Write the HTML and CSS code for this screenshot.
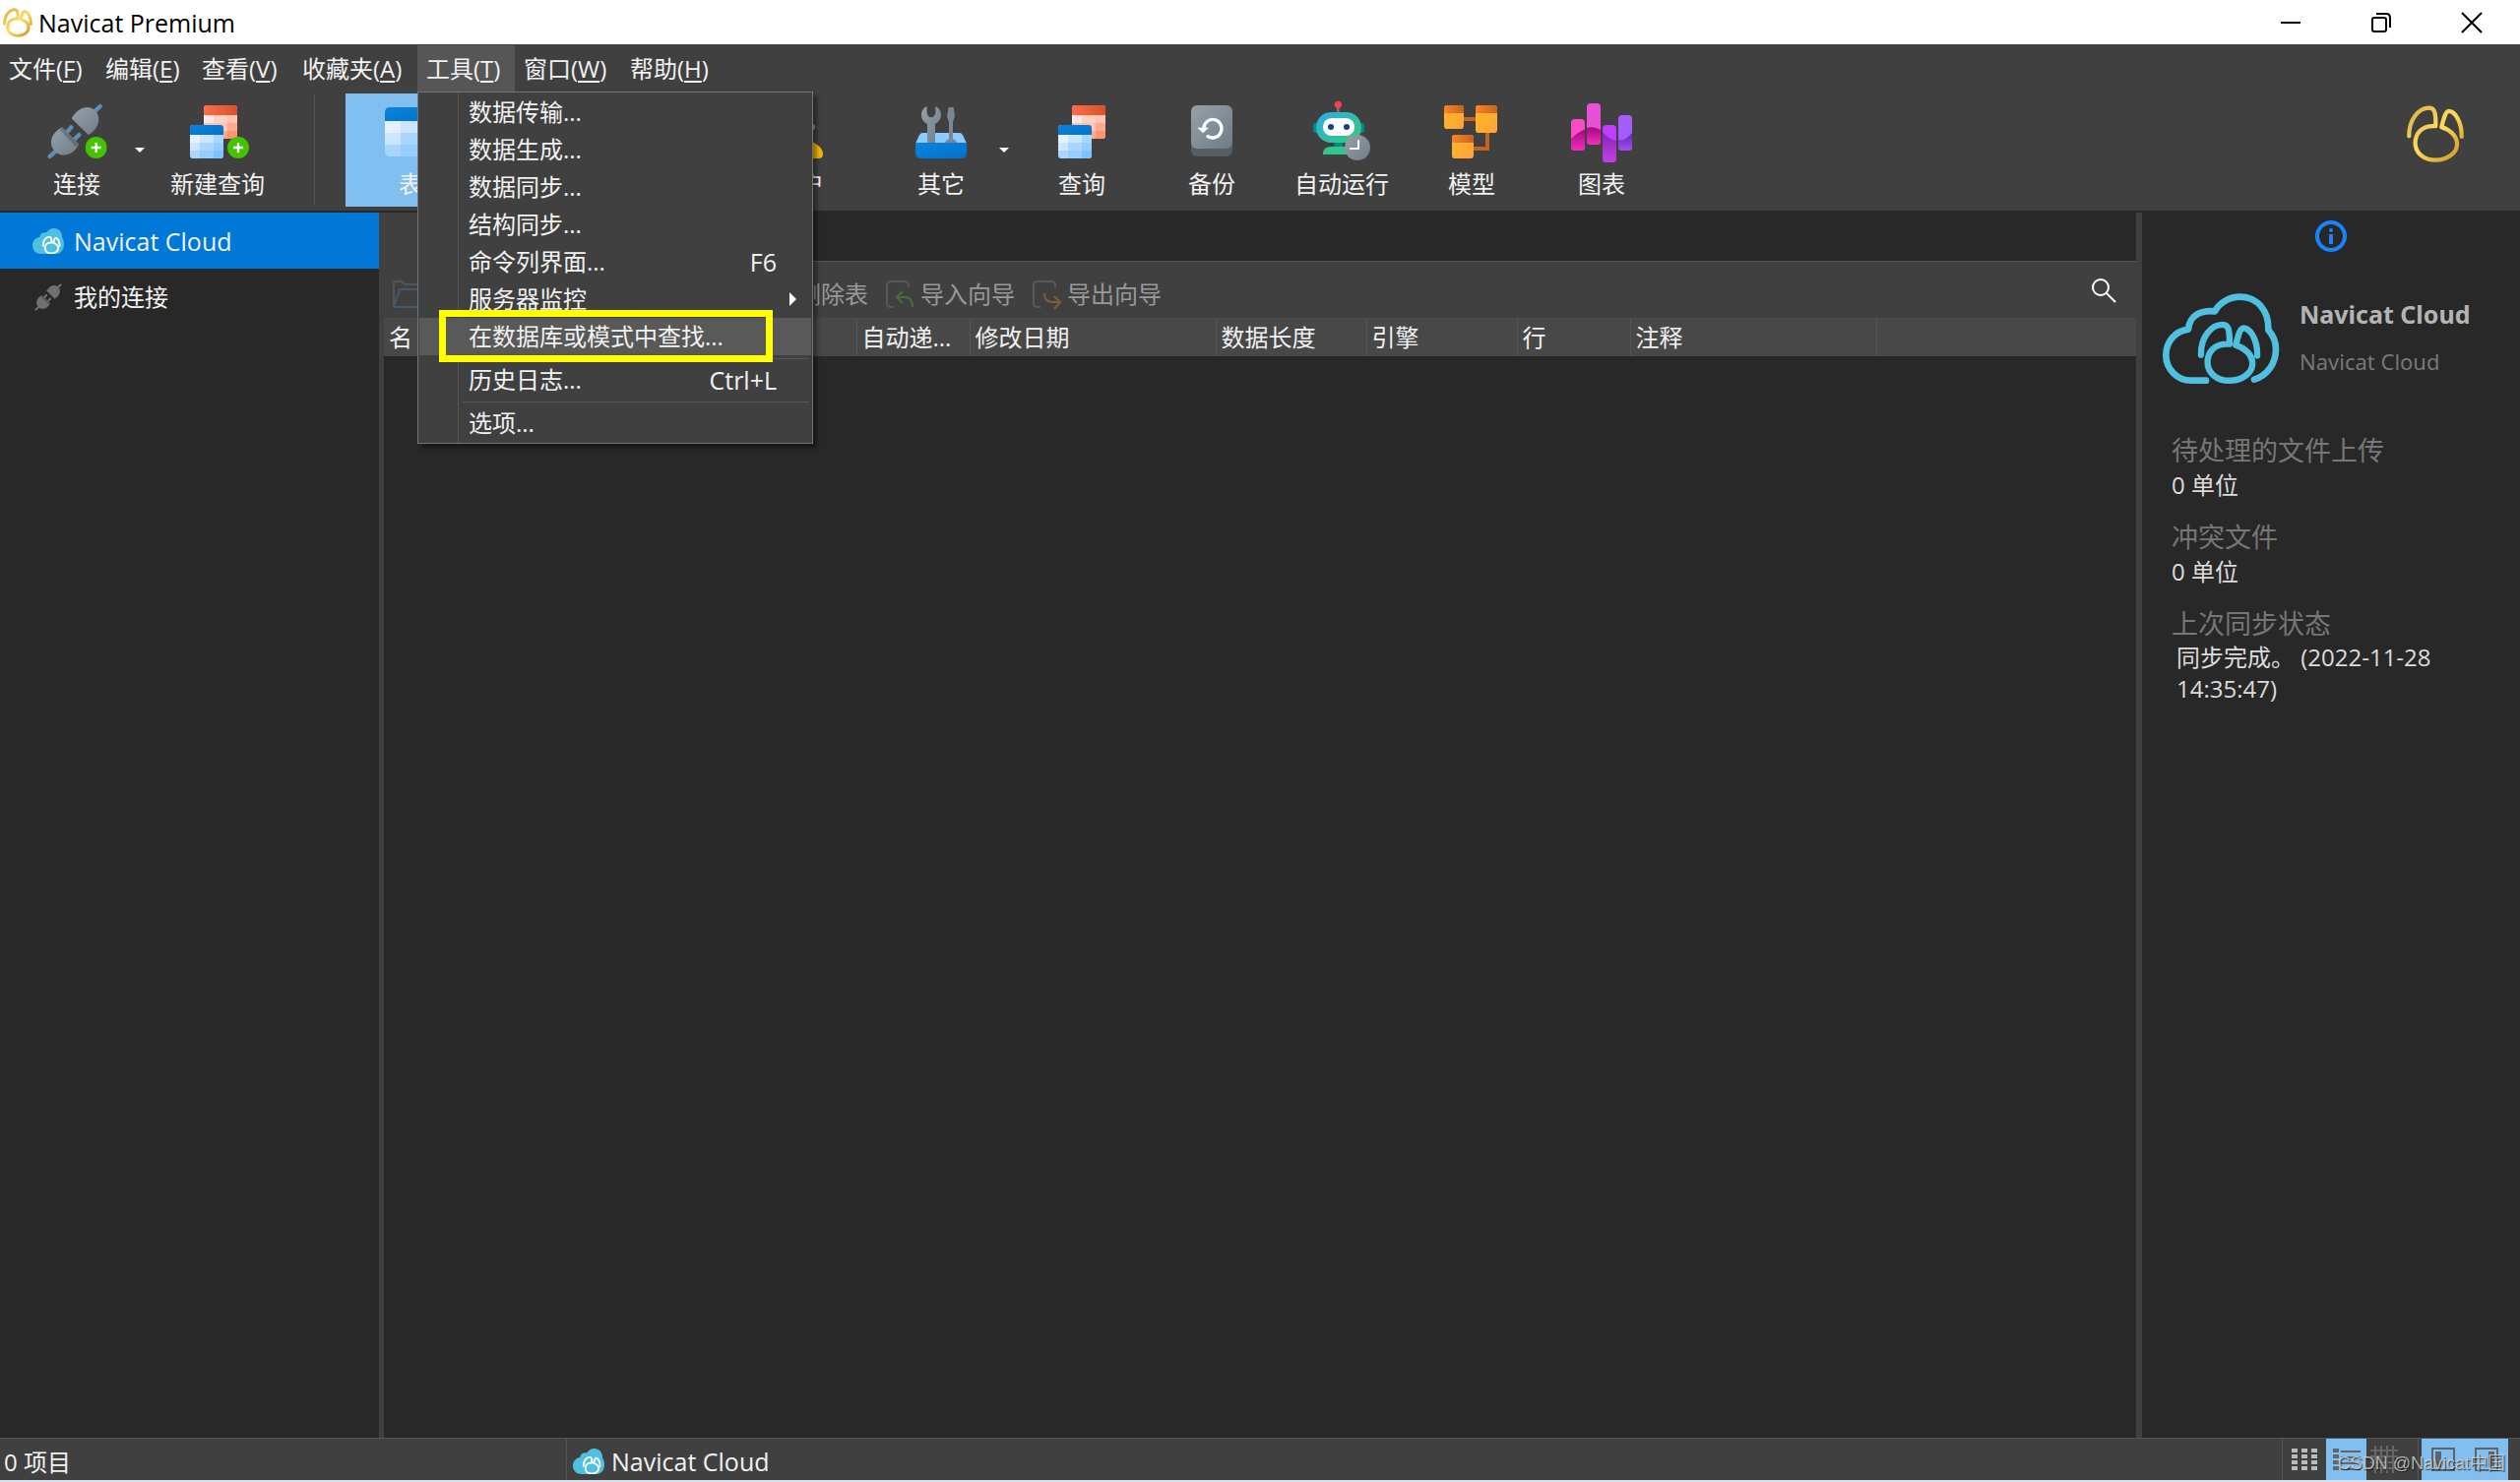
FILE: index.html
```html
<!DOCTYPE html>
<html lang="zh-CN">
<head>
<meta charset="utf-8">
<title>Navicat Premium</title>
<link rel="stylesheet" href="styles.css">
</head>
<body>
<svg class="defs" aria-hidden="true">
  <defs>
    <linearGradient id="gold" x1="0" y1="0" x2="1" y2="1"><stop offset="0" stop-color="#d9b04a"/><stop offset=".5" stop-color="#ffdc5c"/><stop offset="1" stop-color="#c98f22"/></linearGradient>
    <linearGradient id="blueHead" x1="0" y1="0" x2="1" y2="1"><stop offset="0" stop-color="#0a84dc"/><stop offset="1" stop-color="#0072cc"/></linearGradient>
    <linearGradient id="redHead"><stop offset="0" stop-color="#ff6d45"/><stop offset="1" stop-color="#d9512c"/></linearGradient>
    <linearGradient id="steel" x1="0" y1="0" x2="1" y2="1"><stop offset="0" stop-color="#97a1aa"/><stop offset="1" stop-color="#6f7c87"/></linearGradient>
    <linearGradient id="amber" x1="0" y1="0" x2="1" y2="1"><stop offset="0" stop-color="#ffba22"/><stop offset="1" stop-color="#ffa03c"/></linearGradient>
    <linearGradient id="rust"><stop offset="0" stop-color="#ff8228"/><stop offset="1" stop-color="#c4641e"/></linearGradient>
    <linearGradient id="robot" x1="0" y1="0" x2="1" y2="1"><stop offset=".1" stop-color="#2bb0dc"/><stop offset=".8" stop-color="#34c48c"/></linearGradient>
    <linearGradient id="pinkDark" x1="0" y1="0" x2="0" y2="1"><stop offset="0" stop-color="#a3087e"/><stop offset="1" stop-color="#f32fc0"/></linearGradient>
    <linearGradient id="purpleDark" x1="0" y1="0" x2="0" y2="1"><stop offset="0" stop-color="#8425b4"/><stop offset="1" stop-color="#c43fe6"/></linearGradient>
    <linearGradient id="violetDark" x1="0" y1="0" x2="0" y2="1"><stop offset="0" stop-color="#5c2ab0"/><stop offset="1" stop-color="#a44cf8"/></linearGradient>
  </defs>
  <symbol id="mark" viewBox="1033 319 182 178">
    <path d="M1043 415C1042 365 1072 328 1105 328C1121 328 1126 340 1125 384L1117 384C1084 384 1062 405 1062 436C1062 468 1090 489 1124 489C1160 489 1191 468 1191 440C1191 415 1170 395 1143 387C1150 360 1155 338 1166 338C1187 340 1206 375 1205 417" fill="none" stroke-linecap="round" stroke-linejoin="round"/>
  </symbol>
  <symbol id="cloud" viewBox="99 696 96 78">
    <path fill="#4fc0e0" d="M125 774C108 774 99 762 99 748C99 735 108 725 121 722C122 712 130 708 142 709C146 701 155 696 164 696C178 696 190 707 189 724C193 730 195 736 195 745C195 760 187 774 170 774Z"/>
    <svg x="128" y="719" width="57" height="56" viewBox="1033 319 182 178" stroke="#fff" stroke-width="18"><use href="#mark" x="1033" y="319" width="182" height="178"/></svg>
  </symbol>
  <symbol id="plug" viewBox="141 315 171 171">
    <path class="pin" d="M150 477L172 457M284 343L303 324M196 410L215 388M220 430L239 411" stroke-width="13" stroke-linecap="round"/>
    <path class="body" d="M188 388L239 439C220 478 185 480 165 461C147 443 148 408 188 388Z"/>
    <path class="body" d="M216 361C238 323 271 320 288 337C306 355 303 392 267 411Z"/>
    <path class="shade" d="M188 388L239 439L230 448L180 397Z"/>
  </symbol>
  <symbol id="plus" viewBox="0 0 66 66">
    <circle cx="33" cy="33" r="33" fill="#43c400"/><path d="M18 33H48M33 18V48" stroke="#fff" stroke-width="7"/>
  </symbol>
  <symbol id="tables" viewBox="0 0 144 162">
    <rect x="42" width="102" height="102" rx="10" fill="#ffc3b0"/>
    <path d="M42 30h30v24H42z" fill="#ffe8e2"/><path d="M72 30h42v24H72z" fill="#ffd0c0"/><path d="M114 54h30v24h-30z" fill="#ffa88e"/><path d="M84 78h30v24H84z" fill="#ffa88e"/><path d="M114 78h30v14q0 10-10 10h-20z" fill="#ff9474"/>
    <path d="M42 30V10Q42 0 52 0h82q10 0 10 10v20z" fill="url(#redHead)"/>
    <rect y="60" width="102" height="102" rx="10" fill="#a8d6ff"/>
    <path d="M0 90h30v24H0z" fill="#e4f2ff"/><path d="M30 90h42v24H30zM0 114h30v24H0z" fill="#cce6ff"/><path d="M72 114h30v24H72zM30 138h42v24H30z" fill="#94ceff"/><path d="M72 138h30v14q0 10-10 10H72z" fill="#7cc2ff"/>
    <path d="M0 90V70q0-10 10-10h82q10 0 10 10v20z" fill="url(#blueHead)"/>
  </symbol>
</svg>

<header class="titlebar">
  <svg class="app-icon" stroke="url(#gold)" stroke-width="18"><use href="#mark"/></svg>
  <h1>Navicat Premium</h1>
  <div class="window-buttons">
    <button aria-label="最小化"><svg width="20" height="20" viewBox="0 0 20 20"><path d="M0 10H20" stroke="#000" stroke-width="2"/></svg></button>
    <button aria-label="还原"><svg width="20" height="20" viewBox="0 0 20 20" fill="none" stroke="#000" stroke-width="2"><rect x="1" y="5" width="14" height="14" rx="2"/><path d="M5 1H15Q19 1 19 5V15"/></svg></button>
    <button aria-label="关闭"><svg width="20" height="20" viewBox="0 0 20 20"><path d="M0 0L20 20M20 0L0 20" stroke="#000" stroke-width="2"/></svg></button>
  </div>
</header>

<nav class="menubar">
  <button>文件(<u>F</u>)</button>
  <button>编辑(<u>E</u>)</button>
  <button>查看(<u>V</u>)</button>
  <button>收藏夹(<u>A</u>)</button>
  <div class="menu-host">
    <button class="open">工具(<u>T</u>)</button>
    <div class="menu" role="menu">
      <button role="menuitem">数据传输...</button>
      <button role="menuitem">数据生成...</button>
      <button role="menuitem">数据同步...</button>
      <button role="menuitem">结构同步...</button>
      <button role="menuitem">命令列界面...<kbd>F6</kbd></button>
      <button role="menuitem">服务器监控<svg class="sub" viewBox="0 0 7 14"><path d="M0 0L7 7L0 14Z" fill="#fff"/></svg></button>
      <button role="menuitem" class="hover">在数据库或模式中查找...<span class="marker"></span></button>
      <hr>
      <button role="menuitem">历史日志...<kbd>Ctrl+L</kbd></button>
      <hr>
      <button role="menuitem">选项...</button>
    </div>
  </div>
  <button>窗口(<u>W</u>)</button>
  <button>帮助(<u>H</u>)</button>
</nav>

<div class="toolbar">
  <div class="split">
    <button class="tool">
      <svg viewBox="133 309 198 180"><use class="plug-color" href="#plug" x="141" y="315" width="171" height="171"/><use href="#plus" x="258" y="417" width="66" height="66"/></svg>
      连接
    </button>
    <button class="caret" aria-label="更多连接"><svg viewBox="0 0 10 5"><path d="M0 0H10L5 5Z" fill="#fff"/></svg></button>
  </div>
  <button class="tool">
    <svg viewBox="564 309 198 180"><use href="#tables" x="579" y="321" width="144" height="162"/><use href="#plus" x="693" y="417" width="66" height="66"/></svg>
    新建查询
  </button>
  <div class="divider"></div>
  <button class="tool active">
    <svg viewBox="1152 309 198 180"><rect x="1173" y="327" width="156" height="150" rx="16" fill="#a8d6ff"/><path d="M1173 369h48v36h-48z" fill="#e4f2ff"/><path d="M1221 369h60v36h-60zM1173 405h48v36h-48z" fill="#cce6ff"/><path d="M1221 441h60v36h-60z" fill="#94ceff"/><path d="M1173 369V343q0-16 16-16h124q16 0 16 16v26z" fill="url(#blueHead)"/></svg>
    表
  </button>
  <button class="tool after-gap">
    <svg viewBox="-60 69 198 180"><circle cx="39" cy="122" r="38" fill="#f4c9a4"/><circle cx="74" cy="147" r="10" fill="#b39a8a"/><path d="M-30 243V226C-20 195 20 184 39 184C70 184 108 205 108 230Q108 243 94 243Z" fill="#f8b400"/></svg>
    用户
  </button>
  <div class="split">
    <button class="tool">
      <svg viewBox="369 69 198 180"><path d="M412 165H524Q530 165 534 172L546 197H390L402 172Q406 165 412 165Z" fill="#8accff"/><path d="M426 198V138C402 126 402 94 425 84V104Q427 116 438 118Q448 116 451 104V84C474 94 474 126 450 138V198Z" fill="url(#steel)"/><path d="M491 87H506L510 115L504 132V184Q514 186 516 197H480Q482 186 492 184V132L486 115Z" fill="#7a8792"/><path d="M390 195H546V225Q546 243 528 243H408Q390 243 390 225Z" fill="url(#blueHead)"/></svg>
      其它
    </button>
    <button class="caret" aria-label="更多其它"><svg viewBox="0 0 10 5"><path d="M0 0H10L5 5Z" fill="#fff"/></svg></button>
  </div>
  <button class="tool">
    <svg viewBox="798 69 198 180"><use href="#tables" x="825" y="81" width="144" height="162"/></svg>
    查询
  </button>
  <button class="tool">
    <svg viewBox="24 69 198 180"><rect x="60" y="93" width="126" height="144" rx="18" fill="#555e66"/><rect x="60" y="81" width="126" height="132" rx="18" fill="url(#steel)"/><path d="M97 150A27 28 0 1 1 106 173" transform="translate(2 0)" fill="none" stroke="#fff" stroke-width="10"/><path d="M79 149H114L96 166Z" fill="#fff"/></svg>
    备份
  </button>
  <button class="tool">
    <svg viewBox="420 69 198 180"><path d="M508 85V102" stroke="#777" stroke-width="8"/><circle cx="508" cy="79" r="11" fill="#ee4450"/><rect x="432" y="135" width="156" height="30" rx="8" fill="#008a8e"/><path d="M496 190H522V210H496Z" fill="#008a8e"/><path d="M462 231V224Q466 208 486 207H540V231Z" fill="#34c48c"/><rect x="441" y="102" width="138" height="93" rx="46" fill="url(#robot)"/><rect x="462" y="120" width="96" height="54" rx="26" fill="#fff"/><circle cx="486" cy="147" r="9" fill="#173f82"/><circle cx="534" cy="147" r="9" fill="#173f82"/><circle cx="567" cy="210" r="39" fill="url(#steel)"/><path d="M570 187V213H543" fill="none" stroke="#fff" stroke-width="6"/></svg>
    自动运行
  </button>
  <button class="tool">
    <svg viewBox="816 69 198 180"><path d="M888 123H930M963 160V213H918" fill="none" stroke="#c4641e" stroke-width="12"/><rect x="831" y="81" width="60" height="72" rx="10" fill="url(#amber)"/><path d="M831 105V91q0-10 10-10h40q10 0 10 10v14z" fill="url(#rust)"/><rect x="927" y="81" width="66" height="84" rx="10" fill="url(#amber)"/><path d="M927 105V91q0-10 10-10h46q10 0 10 10v14z" fill="url(#rust)"/><rect x="855" y="171" width="66" height="72" rx="10" fill="url(#amber)"/><path d="M855 195V181q0-10 10-10h46q10 0 10 10v14z" fill="url(#rust)"/></svg>
    模型
  </button>
  <button class="tool">
    <svg viewBox="1212 69 198 180"><rect x="1218" y="123" width="42" height="96" rx="11" fill="#f84cc4"/><path d="M1218 183Q1235 166 1260 154V208q0 11-11 11h-20q-11 0-11-11z" fill="url(#pinkDark)"/><rect x="1266" y="75" width="42" height="126" rx="11" fill="#e850d8"/><path d="M1266 150Q1288 143 1308 156V190q0 11-11 11h-20q-11 0-11-11z" fill="url(#pinkDark)"/><rect x="1314" y="141" width="42" height="114" rx="11" fill="#c03cff"/><path d="M1314 163Q1335 188 1356 188V244q0 11-11 11h-20q-11 0-11-11z" fill="url(#purpleDark)"/><rect x="1362" y="111" width="42" height="108" rx="11" fill="#a45cff"/><path d="M1362 188Q1386 188 1404 165V208q0 11-11 11h-20q-11 0-11-11z" fill="url(#violetDark)"/></svg>
    图表
  </button>
  <svg class="brand" stroke="url(#gold)" stroke-width="13"><use href="#mark"/></svg>
</div>

<main class="workspace">
  <aside class="sidebar">
    <a class="node selected" href="#cloud-node"><svg viewBox="0 0 32 26"><use href="#cloud" width="32" height="26"/></svg><span class="product">Navicat Cloud</span></a>
    <a class="node" href="#my-connections"><svg viewBox="0 0 32 26"><use class="plug-gray" href="#plug" x="2" y="-1" width="28" height="28"/></svg>我的连接</a>
  </aside>

  <section class="objects">
    <div class="tabs"><div class="tab"></div></div>
    <div class="object-bar">
      <button aria-label="打开表"><svg width="28" height="28" viewBox="0 0 28 28" fill="none" stroke-width="2"><path d="M1 25V3Q1 1 3 1H9L12 4H27" stroke="#555"/><path d="M1 26L7 9H27V27H2Q1 27 1 26Z" stroke="#3f5a70"/></svg></button>
      <button class="delete">删除表</button>
      <button><svg width="28" height="28" viewBox="0 0 28 28" fill="none" stroke-width="2"><path d="M23 7V5Q23 1 19 1H5Q1 1 1 5V23Q1 27 5 27H8" stroke="#585858"/><path d="M17 11L11 17L17 23M11 17H20Q27 18 27 27" stroke="#4b6b3c"/></svg>导入向导</button>
      <button><svg width="28" height="28" viewBox="0 0 28 28" fill="none" stroke-width="2"><path d="M23 7V5Q23 1 19 1H5Q1 1 1 5V23Q1 27 5 27H8" stroke="#585858"/><path d="M12 13Q12 22 20 22H27M22 16L28 22L22 29" stroke="#7d6038"/></svg>导出向导</button>
      <button class="search" aria-label="搜索"><svg width="24" height="24" viewBox="0 0 24 24" fill="none" stroke="#fff" stroke-width="2"><circle cx="9" cy="9" r="8"/><path d="M15 15L24 24"/></svg></button>
    </div>
    <table>
      <colgroup><col class="c-name"><col class="c-small"><col class="c-wide"><col class="c-mid"><col class="c-mid"><col class="c-small"><col class="c-wide"><col></colgroup>
      <thead><tr><th>名</th><th>自动递...</th><th>修改日期</th><th>数据长度</th><th>引擎</th><th>行</th><th>注释</th><th></th></tr></thead>
    </table>
  </section>

  <aside class="info">
    <svg class="info-icon" viewBox="0 0 32 32"><circle cx="16" cy="16" r="14" fill="none" stroke="#1a84ff" stroke-width="4"/><circle cx="16" cy="10" r="2" fill="#1a84ff"/><path d="M14 14H18V24H14Z" fill="#1a84ff"/></svg>
    <div class="account">
      <svg viewBox="291 894 357 276" fill="none" stroke="#4fc0e0" stroke-width="20" stroke-linecap="round" stroke-linejoin="round"><path d="M423 1160H378C335 1160 301 1125 301 1083C301 1040 330 1010 369 1004C373 965 402 945 450 949C465 922 495 905 526 905C578 905 615 945 613 1006C630 1025 636 1042 636 1065C636 1110 608 1145 570 1157"/><use href="#mark" x="397" y="979" width="193" height="191" stroke-width="18"/></svg>
      <div><h2>Navicat Cloud</h2><p>Navicat Cloud</p></div>
    </div>
    <dl>
      <dt>待处理的文件上传</dt><dd>0 单位</dd>
      <dt>冲突文件</dt><dd>0 单位</dd>
      <dt>上次同步状态</dt><dd class="sync">同步完成。 (2022-11-28 14:35:47)</dd>
    </dl>
  </aside>
</main>

<footer class="statusbar">
  <div class="count">0 项目</div>
  <div class="current"><svg viewBox="0 0 32 26"><use href="#cloud" width="32" height="26"/></svg><span class="product">Navicat Cloud</span></div>
  <div class="views">
    <button aria-label="网格"><svg width="26" height="22" viewBox="0 0 26 22"><path d="M0 2H26M0 8H26M0 14H26M0 20H26" stroke="#bbb" stroke-width="4" stroke-dasharray="6 4"/></svg></button>
    <button class="on" aria-label="列表"><svg width="28" height="22" viewBox="0 0 28 22"><path d="M0 2H6M0 8H6M0 14H6M0 20H6" stroke="#666" stroke-width="4"/><path d="M8 3H28M8 9H28M8 15H28M8 21H28" stroke="#666" stroke-width="2"/></svg></button>
    <button class="relations" aria-label="关系图"><svg width="28" height="28" viewBox="0 0 28 28"><path d="M5 0V28M11 0V28M17 0V28M23 0V28M0 5H28M0 11H28M0 17H28M0 23H28" stroke="#666" stroke-width="2"/></svg></button>
  </div>
  <div class="panes">
    <button class="on" aria-label="左窗格"><svg width="24" height="24" viewBox="0 0 24 24"><rect x="1" y="1" width="22" height="22" fill="none" stroke="#606468" stroke-width="2"/><path d="M4 4H10V20H4Z" fill="#606468"/></svg></button>
    <button class="on" aria-label="右窗格"><svg width="24" height="24" viewBox="0 0 24 24"><rect x="1" y="1" width="22" height="22" fill="none" stroke="#606468" stroke-width="2"/><path d="M14 4H20V20H14Z" fill="#606468"/></svg></button>
  </div>
  <span class="watermark">CSDN @Navicat中国</span>
</footer>
</body>
</html>
```

FILE: styles.css
```css
* { box-sizing: border-box; }

body {
  margin: 0;
  min-height: 100vh;
  display: flex;
  flex-direction: column;
  background: #404040;
  color: #f2f2f2;
  font: 24px/30px "Open Sans", "Noto Sans CJK SC", sans-serif;
}

button {
  margin: 0;
  padding: 0;
  border: 0;
  background: none;
  color: inherit;
  font: inherit;
  white-space: nowrap;
}

svg { flex: none; overflow: visible; }
.defs { position: absolute; width: 0; height: 0; }
.product { font-size: 25px; }

.titlebar {
  height: 45px;
  display: flex;
  align-items: center;
  background: #fff;
  color: #000;
}
.app-icon { width: 30px; height: 30px; margin: 0 6px 0 3px; }
.titlebar h1 { margin: 0; font-size: 25px; font-weight: 400; }
.window-buttons { margin-left: auto; padding-right: 3px; display: flex; }
.window-buttons button { width: 92px; height: 42px; display: grid; place-items: center; }

.menubar {
  height: 48px;
  display: grid;
  grid-template-columns: 98px 98px 102px 126px 99px 108px 104px;
  padding-top: 1px;
}
.menubar > button, .menubar .open { padding-left: 9px; text-align: left; }
.menubar u { text-underline-offset: 3px; }
.menu-host { position: relative; display: grid; }
.open { background: #565656; }

.menu {
  position: absolute;
  z-index: 2;
  top: 47px;
  left: 0;
  width: 402px;
  padding: 1px;
  border: 1px solid #757575;
  background: linear-gradient(90deg, transparent 40px, #555 40px, #555 41px, transparent 41px) #404040;
  box-shadow: 4px 4px 4px #0006;
  display: flex;
  flex-direction: column;
}
.menu button {
  position: relative;
  height: 38px;
  padding: 0 35px 0 50px;
  display: flex;
  align-items: center;
}
.menu .hover { background: #595959; }
.menu kbd { margin-left: auto; font: inherit; font-size: 25px; }
.menu .sub { width: 7px; height: 14px; margin: 0 -20px 0 auto; }
.menu hr {
  width: 352px;
  height: 1px;
  margin: 3px 2px 2px auto;
  border: 0;
  background: #555;
}
.marker {
  position: absolute;
  top: -8px;
  left: 20px;
  width: 339px;
  height: 53px;
  border: 7px solid #ff0;
}

.toolbar {
  display: flex;
  align-items: flex-start;
  padding: 2px 56px 4px 1px;
}
.tool {
  width: 132px;
  height: 115px;
  padding-top: 8px;
  display: flex;
  flex-direction: column;
  align-items: center;
  gap: 9px;
}
.tool svg { width: 66px; height: 60px; }
.tool.active { background: #80bff0; }
.after-gap { margin-left: 264px; }
.split { display: flex; width: 154px; padding-left: 26px; }
.split .tool { flex: 1; }
.caret { width: 26px; height: 115px; display: grid; place-items: center; }
.caret svg { width: 10px; height: 5px; }
.divider { width: 1px; height: 113px; margin: 1px 31px 0 32px; background: #555; }
.brand { width: 60px; height: 60px; margin: 11px 0 0 auto; }
.plug-color { fill: url(#steel); stroke: #5c8fb6; }
.plug-gray { fill: #707070; stroke: #707070; }
symbol .body, symbol .shade { stroke: none; }
symbol .shade { fill: #0003; }

.workspace {
  flex: 1;
  display: flex;
  border-top: 2px solid #282828;
  background: #404040;
}
.sidebar { width: 385px; background: #282828; }
.node {
  height: 57px;
  display: flex;
  align-items: center;
  gap: 10px;
  padding-left: 33px;
  color: inherit;
  text-decoration: none;
}
.node svg { width: 32px; height: 26px; }
.node.selected { background: #0078d7; }

.objects { flex: 1; min-width: 0; margin-left: 5px; background: #282828; }
.tabs { height: 50px; border-bottom: 1px solid #555; display: flex; }
.tab { width: 110px; height: 50px; background: #404040; }
.object-bar {
  height: 57px;
  padding: 9px 21px 0 9px;
  display: flex;
  align-items: center;
  gap: 18px;
  background: #404040;
  color: #999;
}
.object-bar button { display: flex; align-items: center; gap: 7px; }
.object-bar .delete { margin-left: 365px; }
.object-bar .search { margin: 0 0 8px auto; }
table { width: 100%; table-layout: fixed; border-collapse: collapse; background: #484848; }
th {
  height: 39px;
  padding: 0 0 0 5px;
  border-right: 1px solid #555;
  font-weight: 400;
  text-align: left;
  white-space: nowrap;
}
th:last-child { border: 0; }
.c-name { width: 480px; }
.c-small { width: 115px; }
.c-mid { width: 153px; }
.c-wide { width: 250px; }

.info { width: 384px; margin-left: 6px; background: #282828; }
.info-icon { display: block; width: 32px; height: 32px; margin: 8px auto 0; }
.account { display: flex; align-items: flex-start; gap: 20px; margin: 42px 0 0 21px; }
.account svg { width: 119px; height: 92px; }
.account h2 { margin: 6px 0 18px; font: bold 25px/30px "Noto Sans", sans-serif; color: #b4b4b4; }
.account p { margin: 0; font: 22px/30px "Noto Sans", sans-serif; color: #777; }
dl { margin: 50px 24px 0 30px; }
dt { font-size: 27px; line-height: 36px; color: #777; }
dd { margin: 0 0 18px; line-height: 34px; color: #dcdcdc; }
dd.sync { padding-left: 5px; line-height: 32px; }

.statusbar {
  position: relative;
  height: 45px;
  display: flex;
  border-top: 1px solid #555;
  border-bottom: 2px solid #d3e1ec;
}
.count { width: 576px; padding: 9px 4px 0; border-right: 1px solid #555; }
.current { display: flex; align-items: center; gap: 7px; padding: 3px 0 0 6px; }
.current svg { width: 32px; height: 26px; }
.views, .panes { display: flex; }
.views { margin-left: auto; border: solid #555; border-width: 0 1px; }
.panes { padding: 0 12px 0 3px; }
.views button, .panes button { display: grid; place-items: center; width: 44px; }
.views .on { width: 41px; }
.views .relations { width: 52px; padding-right: 16px; }
.on { background: #80bff0; }
.watermark {
  position: absolute;
  right: 15px;
  bottom: 2px;
  color: #d8d8d8cc;
  font: 18px/30px "Liberation Sans", "Noto Sans CJK SC", sans-serif;
  text-shadow: 1px 1px 1px #000a;
}
```
